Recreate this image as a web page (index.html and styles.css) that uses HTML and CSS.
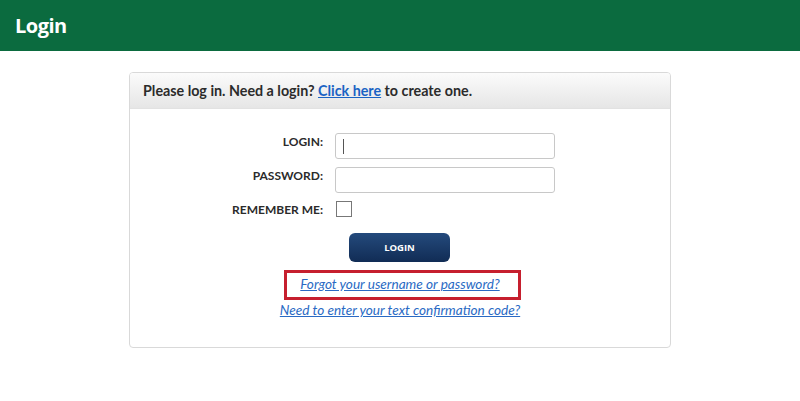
FILE: index.html
```html
<!DOCTYPE html>
<html>
<head>
<meta charset="utf-8">
<link rel="stylesheet" href="styles.css">
</head>
<body>
<header class="topbar"><h1 class="title">Login</h1></header>
<main class="page">
  <section class="panel">
    <div class="panel-head">Please log in. Need a login? <a href="#" class="head-link">Click here</a> to create one.</div>
    <div class="panel-body">
      <form class="form">
        <label class="label label-top">LOGIN:</label>
        <div class="field"><input class="input" type="text"><span class="caret"></span></div>
        <label class="label label-top">PASSWORD:</label>
        <div class="field"><input class="input" type="password"></div>
        <label class="label">REMEMBER ME:</label>
        <div class="field"><span class="check"></span></div>
      </form>
      <div class="actions">
        <button class="btn" type="button">LOGIN</button>
        <div class="highlight"><a href="#" class="link">Forgot your username or password?</a></div>
        <a href="#" class="link link-2">Need to enter your text confirmation code?</a>
      </div>
    </div>
  </section>
</main>
</body>
</html>
```
FILE: styles.css
```css
* { box-sizing: border-box; }
html, body { margin: 0; padding: 0; background: #fff; }
body { font-family: "Lato", "Open Sans", sans-serif; color: #222; }

.topbar {
  height: 51px;
  background: #0b6b3f;
  display: flex;
  align-items: center;
  padding-left: 15px;
}
.title {
  margin: 0;
  color: #fff;
  font-size: 20px;
  font-weight: 700;
  font-family: "Open Sans", sans-serif;
  letter-spacing: -0.5px;
}

.page { display: flex; justify-content: center; padding-top: 21px; }

.panel {
  width: 542px;
  height: 276px;
  border: 1px solid #d9d9d9;
  border-radius: 4px;
  overflow: hidden;
}
.panel-head {
  height: 36px;
  padding-left: 13px;
  display: flex;
  align-items: center;
  white-space: pre;
  font-size: 14.3px;
  font-weight: 700;
  color: #2b2b2b;
  background: linear-gradient(#fbfbfb, #e6e6e6);
  border-bottom: 1px solid #e2e2e2;
}
.head-link { color: #1a63c4; text-decoration: underline; }

.panel-body { padding-top: 24px; }

.form {
  display: grid;
  grid-template-columns: 193px 220px;
  column-gap: 12px;
  row-gap: 8px;
  align-items: center;
}
.label {
  text-align: right;
  font-size: 12px;
  font-weight: 700;
  color: #2b2b2b;
}
.label-top { align-self: start; padding-top: 1px; }
.field { position: relative; display: flex; align-items: center; }
.input {
  width: 220px;
  height: 26px;
  border: 1px solid #c8c8c8;
  border-radius: 3px;
  background: #fff;
  padding: 0;
}
.caret {
  position: absolute;
  left: 8px;
  top: 6px;
  width: 1px;
  height: 15px;
  background: #555;
}
.check {
  width: 16px;
  height: 16px;
  border: 1px solid #777;
  background: #fff;
  margin-left: 1px;
}

.actions {
  display: flex;
  flex-direction: column;
  align-items: center;
  padding-top: 16px;
}
.btn {
  width: 101px;
  height: 29px;
  border: 0;
  border-radius: 6px;
  background: linear-gradient(#244a7c, #112c55);
  color: #fff;
  font-family: "Open Sans", sans-serif;
  font-size: 9.5px;
  font-weight: 700;
  margin-left: -1px;
}
.highlight {
  margin-top: 8px;
  width: 237px;
  height: 30px;
  border: 3px solid #c61f2e;
  display: flex;
  align-items: center;
  justify-content: center;
  margin-left: 4px;
}
.link {
  font-size: 13.6px;
  font-style: italic;
  color: #2a6ac4;
  text-decoration: underline;
}
.highlight .link { margin-left: -4px; margin-top: -3px; }
.link-2 { margin-top: 2px; }
```
